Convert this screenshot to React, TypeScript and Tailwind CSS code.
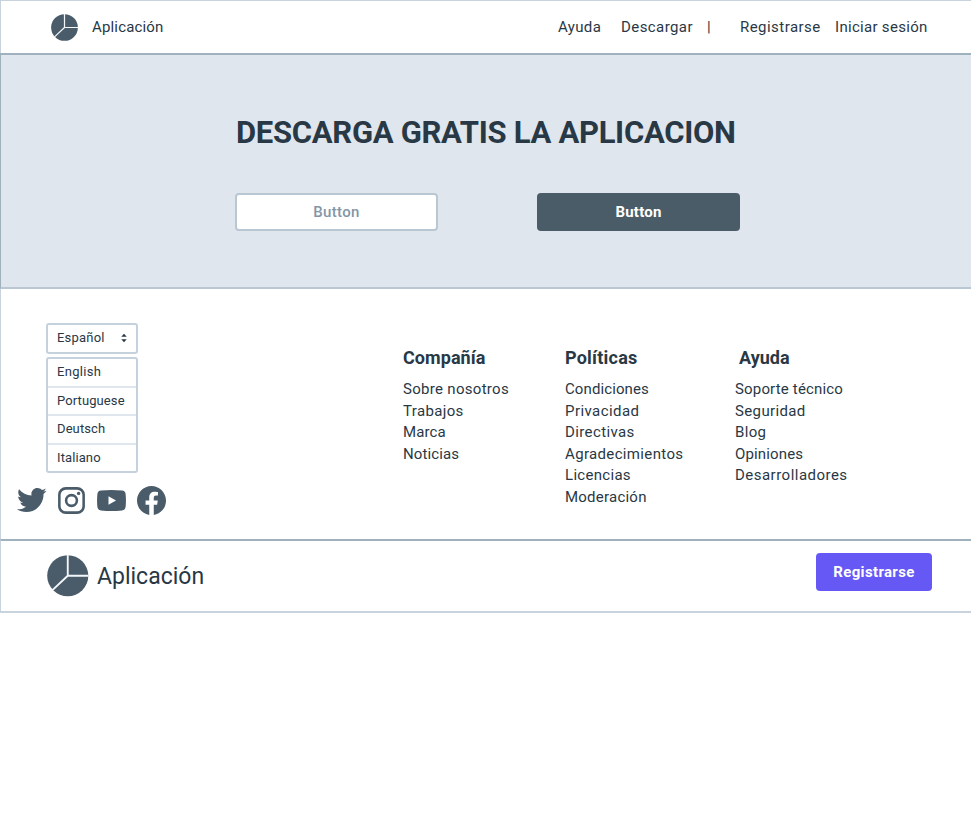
function Pie({ className }: { className: string }) {
  return (
    <svg viewBox="0 0 42 42" className={className} aria-hidden="true">
      <circle cx="21" cy="21" r="20.8" fill="#4a5c6a" />
      <path d="M21 0V21H42M21 21L5.5 35.5" fill="none" stroke="#f4f7fa" strokeWidth="1.9" />
    </svg>
  );
}

type Item = { label: string; className: string };

const languages: Item[] = [
  { label: "English", className: "tracking-[0.3px]" },
  { label: "Portuguese", className: "tracking-[0.1px]" },
  { label: "Deutsch", className: "tracking-[0.1px]" },
  { label: "Italiano", className: "tracking-[0.1px]" },
];

const company: Item[] = [
  { label: "Sobre nosotros", className: "tracking-[0.3px]" },
  { label: "Trabajos", className: "tracking-[0.36px]" },
  { label: "Marca", className: "tracking-[0.1px]" },
  { label: "Noticias", className: "tracking-[0.1px]" },
];

const policies: Item[] = [
  { label: "Condiciones", className: "tracking-[0.1px]" },
  { label: "Privacidad", className: "tracking-[0.44px]" },
  { label: "Directivas", className: "tracking-[0.38px]" },
  { label: "Agradecimientos", className: "tracking-[0.35px]" },
  { label: "Licencias", className: "tracking-[0.3px]" },
  { label: "Moderación", className: "tracking-[0.23px]" },
];

const help: Item[] = [
  { label: "Soporte técnico", className: "tracking-[0.17px]" },
  { label: "Seguridad", className: "tracking-[0.37px]" },
  { label: "Blog", className: "tracking-[0.35px]" },
  { label: "Opiniones", className: "tracking-[0.14px]" },
  { label: "Desarrolladores", className: "tracking-[0.48px]" },
];

function LinkColumn({ title, titleClass, items, className }: { title: string; titleClass: string; items: Item[]; className: string }) {
  return (
    <div className={`shrink-0 whitespace-nowrap ${className}`}>
      <h2 className={`text-[18px] leading-6 font-bold ${titleClass}`}>{title}</h2>
      <ul className="mt-[9px] text-[15px] leading-[21.6px]">
        {items.map((item) => (
          <li key={item.label} className={item.className}>{item.label}</li>
        ))}
      </ul>
    </div>
  );
}

export default function App() {
  return (
    <div className="h-[831px] w-full overflow-hidden bg-white font-['Roboto',sans-serif] text-[#293845]">
      <header className="flex h-[53px] items-center border-t border-l border-[#c8d3dd] text-[15px] whitespace-nowrap">
        <Pie className="ml-[50px] size-[27px] shrink-0" />
        <span className="ml-[14px] tracking-[0.16px]">Aplicación</span>
        <nav className="ml-auto flex w-[413px] shrink-0">
          <span className="w-[63px] tracking-[0.35px]">Ayuda</span>
          <span className="w-[86px] tracking-[0.42px]">Descargar</span>
          <span className="w-[33px]">|</span>
          <span className="w-[95px] tracking-[0.46px]">Registrarse</span>
          <span className="tracking-[0.3px]">Iniciar sesión</span>
        </nav>
      </header>

      <section className="h-[236px] border-t-2 border-b-2 border-l border-t-[#9fb1bd] border-b-[#b9c7d3] border-l-[#9fb1bd] bg-[#dfe6ee] pt-[59px]">
        <h1 className="pl-[235px] text-[31px] leading-[38px] font-bold tracking-[-0.29px] whitespace-nowrap">DESCARGA GRATIS LA APLICACION</h1>
        <div className="mt-[41px] ml-[234px] flex gap-[99px] text-[15px]">
          <button className="h-[38px] w-[203px] rounded-[4px] border-2 border-[#b9c7d3] bg-white font-medium tracking-[0.35px] text-[#8496a5]">Button</button>
          <button className="h-[38px] w-[203px] rounded-[4px] bg-[#4b5c69] font-bold tracking-[0.2px] text-white">Button</button>
        </div>
      </section>

      <section className="flex h-[250px] border-l border-[#c8d3dd]">
        <div className="ml-[16px] w-[386px] shrink-0 pt-[34px] text-[13px]">
          <div className="ml-[29px] flex h-[31px] w-[92px] items-center justify-between rounded-[3px] border-2 border-[#c5d1dc] pr-[9px] pl-[9px]">
            <span className="pb-[2px] tracking-[0.2px]">Español</span>
            <svg viewBox="0 0 6 10" className="mb-px h-[10px] w-[6px]" aria-hidden="true">
              <path d="M0.3 3.8L3 0.8L5.7 3.8ZM0.3 6.2L3 9.2L5.7 6.2Z" fill="#293845" />
            </svg>
          </div>
          <ul className="mt-[3px] ml-[29px] w-[92px] rounded-[3px] border-2 border-[#c5d1dc]">
            {languages.map((item) => (
              <li key={item.label} className="flex h-[28.7px] items-center border-b-2 border-[#dfe6ee] pb-[1.5px] pl-[9px] last:h-[26px] last:border-b-0">
                <span className={item.className}>{item.label}</span>
              </li>
            ))}
          </ul>
          <div className="mt-[12px] flex h-[30px] items-center text-[#4a5c6a]">
            <svg viewBox="1.54 4 20.92 17" className="h-[24px] w-[29.5px]" fill="currentColor" aria-hidden="true">
              <path d="M22.46,6C21.69,6.35 20.86,6.58 20,6.69C20.88,6.16 21.56,5.32 21.88,4.31C21.05,4.81 20.13,5.16 19.16,5.36C18.37,4.5 17.26,4 16,4C13.65,4 11.73,5.92 11.73,8.29C11.73,8.63 11.77,8.96 11.84,9.27C8.28,9.09 5.11,7.38 3,4.79C2.63,5.42 2.42,6.16 2.42,6.94C2.42,8.43 3.17,9.75 4.33,10.5C3.62,10.5 2.96,10.3 2.38,10V10.03C2.38,12.11 3.86,13.85 5.82,14.24C5.46,14.34 5.08,14.39 4.69,14.39C4.42,14.39 4.15,14.36 3.89,14.31C4.43,16 6,17.26 7.89,17.29C6.43,18.45 4.58,19.13 2.56,19.13C2.22,19.13 1.88,19.11 1.54,19.07C3.44,20.29 5.7,21 8.12,21C16,21 20.33,14.46 20.33,8.79C20.33,8.6 20.33,8.42 20.32,8.23C21.16,7.63 21.88,6.87 22.46,6Z" />
            </svg>
            <svg viewBox="2 2 20 20" className="ml-[11.5px] size-[27px]" fill="none" stroke="currentColor" strokeWidth="1.9" aria-hidden="true">
              <rect x="3" y="3" width="18" height="18" rx="4.8" />
              <circle cx="12" cy="12" r="4" />
              <circle cx="17.25" cy="6.75" r="1.25" fill="currentColor" stroke="none" />
            </svg>
            <svg viewBox="0 0 29 21" className="ml-[12px] h-[21px] w-[29px]" aria-hidden="true">
              <path d="M4 0.6Q14.5 -0.4 25 0.6Q28.3 1 28.6 4Q29.3 10.5 28.6 17Q28.3 20 25 20.4Q14.5 21.4 4 20.4Q0.7 20 0.4 17Q-0.3 10.5 0.4 4Q0.7 1 4 0.6Z" fill="currentColor" />
              <path d="M11.5 6.2V14.8L19 10.5Z" fill="white" />
            </svg>
            <svg viewBox="2 2 20 20" className="ml-[11px] size-[29px]" fill="currentColor" aria-hidden="true">
              <path d="M12 2.04C6.5 2.04 2 6.53 2 12.06C2 17.06 5.66 21.21 10.44 21.96V14.96H7.9V12.06H10.44V9.85C10.44 7.34 11.93 5.96 14.22 5.96C15.31 5.96 16.45 6.15 16.45 6.15V8.62H15.19C13.95 8.62 13.56 9.39 13.56 10.17V12.06H16.34L15.89 14.96H13.56V21.96A10 10 0 0 0 22 12.06C22 6.53 17.5 2.04 12 2.04Z" />
            </svg>
          </div>
        </div>
        <LinkColumn title="Compañía" titleClass="tracking-[0.06px]" items={company} className="w-[162px] pt-[57px]" />
        <LinkColumn title="Políticas" titleClass="tracking-[0.23px]" items={policies} className="w-[170px] pt-[57px]" />
        <LinkColumn title="Ayuda" titleClass="pl-[4px] tracking-[0.02px]" items={help} className="pt-[57px]" />
      </section>

      <footer className="flex h-[74px] border-t-2 border-b-2 border-l border-t-[#9fb1bd] border-b-[#c8d3dd] border-l-[#c8d3dd]">
        <Pie className="mt-[14px] ml-[46px] size-[41.5px] shrink-0" />
        <span className="mt-[21px] ml-[8.5px] text-[23px] leading-[30px]">Aplicación</span>
        <button className="mt-[12px] mr-[39px] ml-auto h-[38px] w-[116px] rounded-[4px] bg-[#6558f5] text-[15px] font-bold tracking-[0.35px] text-white">Registrarse</button>
      </footer>
    </div>
  );
}
